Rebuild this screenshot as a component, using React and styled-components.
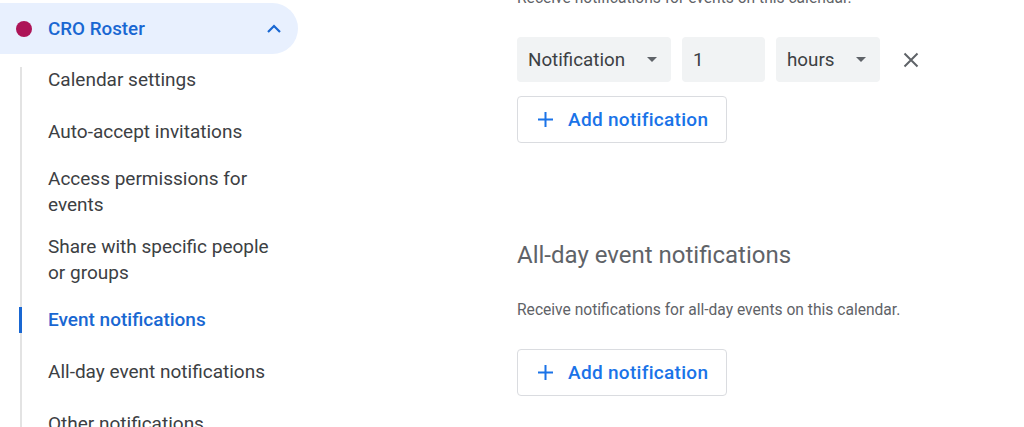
import React from 'react';
import styled, { createGlobalStyle } from 'styled-components';

const GlobalStyle = createGlobalStyle`
  body {
    margin: 0;
    background: #fff;
    font-family: Roboto, "Liberation Sans", Arial, sans-serif;
    overflow: hidden;
  }
`;

const Page = styled.div`
  display: grid;
  grid-template-columns: 298px 1fr;
  height: 427px;
  overflow: hidden;
`;

const Nav = styled.nav`
  display: flex;
  flex-direction: column;
  padding-top: 3px;
`;

const CalendarHeader = styled.div`
  display: flex;
  align-items: center;
  height: 51px;
  padding: 0 16px;
  background: #e8f0fe;
  border-radius: 0 26px 26px 0;
`;

const Dot = styled.span`
  width: 16px;
  height: 16px;
  border-radius: 50%;
  background: ${p => p.color};
  flex-shrink: 0;
`;

const CalendarName = styled.span`
  flex: 1;
  margin-left: 16px;
  font-size: 18.8px;
  font-weight: 500;
  color: #1967d2;
`;

const NavList = styled.ul`
  position: relative;
  list-style: none;
  margin: 0 0 0 20px;
  padding: 0;
  &::before {
    content: '';
    position: absolute;
    left: 0;
    top: 13px;
    bottom: 0;
    width: 2px;
    background: #e3e3e3;
  }
`;

const NavItem = styled.li`
  position: relative;
  display: flex;
  align-items: center;
  min-height: 52px;
  padding: 8px 20px 8px 28px;
  box-sizing: border-box;
  font-size: 19px;
  line-height: 26px;
  color: ${p => (p.$active ? '#1967d2' : '#3c4043')};
  font-weight: ${p => (p.$active ? 500 : 400)};
  &::before {
    content: '';
    display: ${p => (p.$active ? 'block' : 'none')};
    position: absolute;
    left: -1px;
    top: 13px;
    width: 3px;
    height: 26px;
    background: #1967d2;
  }
`;

const Main = styled.main`
  padding-left: 219px;
`;

const Description = styled.p`
  margin: ${p => p.$top}px 0 0;
  font-size: 15.6px;
  line-height: 20px;
  color: #5f6368;
`;

const Heading = styled.h2`
  margin: 97px 0 0;
  font-size: 24px;
  font-weight: 400;
  line-height: 30px;
  color: #5f6368;
`;

const Row = styled.div`
  display: flex;
  align-items: center;
  gap: 11px;
  margin-top: 29px;
`;

const Field = styled.div`
  display: flex;
  align-items: center;
  justify-content: space-between;
  width: ${p => p.$width}px;
  height: 45px;
  padding: 0 14px 0 11px;
  box-sizing: border-box;
  background: #f1f3f4;
  border-radius: 4px;
  font-size: 18.8px;
  color: #3c4043;
`;

const Caret = styled.span`
  width: 0;
  height: 0;
  border-left: 5px solid transparent;
  border-right: 5px solid transparent;
  border-top: 5px solid #5f6368;
`;

const IconButton = styled.button`
  display: flex;
  align-items: center;
  justify-content: center;
  width: 40px;
  height: 40px;
  padding: 0;
  border: none;
  background: none;
  color: #5f6368;
`;

const AddButton = styled.button`
  display: flex;
  align-items: center;
  gap: 14px;
  margin-top: ${p => p.$top}px;
  width: 210px;
  height: 47px;
  padding: 0 0 0 19px;
  box-sizing: border-box;
  background: #fff;
  border: 1px solid #dadce0;
  border-radius: 4px;
  font-family: inherit;
  font-size: 19px;
  font-weight: 500;
  letter-spacing: 0.3px;
  color: #1a73e8;
`;

const PlusIcon = () => (
  <svg width="17" height="17" viewBox="0 0 17 17">
    <path d="M8.5 1v15M1 8.5h15" stroke="#1a73e8" strokeWidth="2" />
  </svg>
);

const CloseIcon = () => (
  <svg width="16" height="16" viewBox="0 0 16 16">
    <path d="M1.5 1.5l13 13M14.5 1.5l-13 13" stroke="currentColor" strokeWidth="2" />
  </svg>
);

const ChevronUp = () => (
  <svg width="16" height="10" viewBox="0 0 16 10">
    <path d="M2 8l6-6 6 6" fill="none" stroke="#1967d2" strokeWidth="2.2" />
  </svg>
);

const navItems = [
  'Calendar settings',
  'Auto-accept invitations',
  'Access permissions for events',
  'Share with specific people or groups',
  'Event notifications',
  'All-day event notifications',
  'Other notifications',
];

export default function App() {
  return (
    <>
      <GlobalStyle />
      <Page>
        <Nav>
          <CalendarHeader>
            <Dot color="#ad1457" />
            <CalendarName>CRO Roster</CalendarName>
            <ChevronUp />
          </CalendarHeader>
          <NavList>
            {navItems.map(item => (
              <NavItem key={item} $active={item === 'Event notifications'}>
                {item}
              </NavItem>
            ))}
          </NavList>
        </Nav>
        <Main>
          <Description $top={-12}>Receive notifications for events on this calendar.</Description>
          <Row>
            <Field $width={154}>
              Notification
              <Caret />
            </Field>
            <Field $width={83}>1</Field>
            <Field $width={104}>
              hours
              <Caret />
            </Field>
            <IconButton aria-label="Remove notification">
              <CloseIcon />
            </IconButton>
          </Row>
          <AddButton $top={14}>
            <PlusIcon />
            Add notification
          </AddButton>
          <Heading>All-day event notifications</Heading>
          <Description $top={30}>Receive notifications for all-day events on this calendar.</Description>
          <AddButton $top={29}>
            <PlusIcon />
            Add notification
          </AddButton>
        </Main>
      </Page>
    </>
  );
}
